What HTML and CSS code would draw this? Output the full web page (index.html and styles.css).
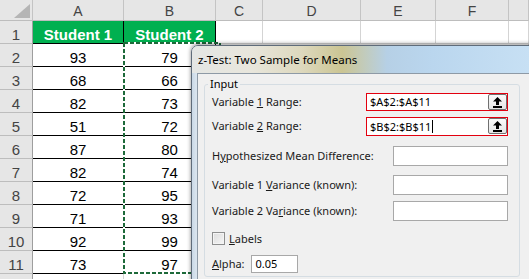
FILE: index.html
```html
<!DOCTYPE html>
<html lang="en">
<head>
  <meta charset="UTF-8" />
  <title>z-Test: Two Sample for Means</title>
  <link rel="stylesheet" href="styles.css">
</head>
<body>
  <div class="sheet">
    <div class="corner">
      <svg width="16" height="14" viewBox="0 0 16 14"><polygon points="16,0 16,14 0,14" fill="#b5b5b5"/></svg>
    </div>
    <div class="col-head">A</div>
    <div class="col-head">B</div>
    <div class="col-head">C</div>
    <div class="col-head">D</div>
    <div class="col-head">E</div>
    <div class="col-head">F</div>
    <div class="col-head"></div>

    <div class="row-head">1</div>
    <div class="cell title">Student 1</div>
    <div class="cell title">Student 2</div>
    <div class="cell blank"></div>
    <div class="cell blank"></div>
    <div class="cell blank"></div>
    <div class="cell blank"></div>
    <div class="cell blank"></div>

    <div class="row-head">2</div>
    <div class="cell data">93</div>
    <div class="cell data">79</div>
    <div class="cell rest"></div>

    <div class="row-head">3</div>
    <div class="cell data">68</div>
    <div class="cell data">66</div>
    <div class="cell rest"></div>

    <div class="row-head">4</div>
    <div class="cell data">82</div>
    <div class="cell data">73</div>
    <div class="cell rest"></div>

    <div class="row-head">5</div>
    <div class="cell data">51</div>
    <div class="cell data">72</div>
    <div class="cell rest"></div>

    <div class="row-head">6</div>
    <div class="cell data">87</div>
    <div class="cell data">80</div>
    <div class="cell rest"></div>

    <div class="row-head">7</div>
    <div class="cell data">82</div>
    <div class="cell data">74</div>
    <div class="cell rest"></div>

    <div class="row-head">8</div>
    <div class="cell data">72</div>
    <div class="cell data">95</div>
    <div class="cell rest"></div>

    <div class="row-head">9</div>
    <div class="cell data">71</div>
    <div class="cell data">93</div>
    <div class="cell rest"></div>

    <div class="row-head">10</div>
    <div class="cell data">92</div>
    <div class="cell data">99</div>
    <div class="cell rest"></div>

    <div class="row-head">11</div>
    <div class="cell data">73</div>
    <div class="cell data">97</div>
    <div class="cell rest"></div>

    <div class="row-head"></div>
    <div class="cell blank"></div>
    <div class="cell blank"></div>
    <div class="cell rest"></div>
  </div>

  <!-- copy marquee around B2:B11 -->
  <svg class="marquee" width="100" height="234">
    <rect x="1" y="1" width="96" height="230" fill="none" stroke="#fff" stroke-width="2"/>
    <rect x="1" y="1" width="96" height="230" fill="none" stroke="#1d6a3a" stroke-width="2" stroke-dasharray="4 2"/>
  </svg>

  <div class="dialog">
    <div class="titlebar">z-Test: Two Sample for Means</div>
    <div class="client">
      <fieldset class="group">
        <legend>Input</legend>

        <div class="row r1">
          <span class="label">Variable <u>1</u> Range:</span>
          <div class="range">
            <span class="value">$A$2:$A$11</span>
            <span class="pick">
              <svg width="9" height="11" viewBox="0 0 9 11"><path d="M4.5 0 L9 4.5 H6 V8 H3 V4.5 H0 Z" fill="#000"/><rect x="0" y="9" width="9" height="2" fill="#000"/></svg>
            </span>
          </div>
        </div>

        <div class="row r2">
          <span class="label">Variable <u>2</u> Range:</span>
          <div class="range">
            <span class="value">$B$2:$B$11<span class="caret"></span></span>
            <span class="pick">
              <svg width="9" height="11" viewBox="0 0 9 11"><path d="M4.5 0 L9 4.5 H6 V8 H3 V4.5 H0 Z" fill="#000"/><rect x="0" y="9" width="9" height="2" fill="#000"/></svg>
            </span>
          </div>
        </div>

        <div class="row r3">
          <span class="label">H<u>y</u>pothesized Mean Difference:</span>
          <div class="box"></div>
        </div>

        <div class="row r4">
          <span class="label">Variable 1 <u>V</u>ariance (known):</span>
          <div class="box"></div>
        </div>

        <div class="row r5">
          <span class="label">Variable 2 Va<u>r</u>iance (known):</span>
          <div class="box"></div>
        </div>

        <div class="row r6">
          <span class="check"></span>
          <span class="label"><u>L</u>abels</span>
        </div>

        <div class="row r7">
          <span class="label"><u>A</u>lpha:</span>
          <div class="alpha">0.05</div>
        </div>
      </fieldset>
    </div>
  </div>
</body>
</html>
```

FILE: styles.css
```css
* {
  margin: 0;
  padding: 0;
  box-sizing: border-box;
}

body {
  width: 529px;
  height: 279px;
  overflow: hidden;
  position: relative;
  background: #fff;
  font-family: 'Liberation Sans', Arial, sans-serif;
}

/* spreadsheet */
.sheet {
  display: grid;
  grid-template-columns: 33px 91px 92px 47px 98px 75px 73px 1fr;
  grid-template-rows: 21px repeat(12, 23px);
}

.corner,
.col-head,
.row-head {
  background: #e6e6e6;
  color: #444;
  font-size: 14px;
  border-right: 1px solid #c4c4c4;
  border-bottom: 1px solid #bdbdbd;
}

.corner {
  display: flex;
  align-items: flex-end;
  justify-content: flex-end;
  padding: 0 2px 2px 0;
}

.col-head {
  text-align: center;
  line-height: 20px;
  padding-top: 1px;
}

.row-head {
  display: flex;
  align-items: flex-end;
  justify-content: center;
  line-height: 17px;
  font-size: 15px;
  border-right-color: #9e9e9e;
}

.cell {
  display: flex;
  align-items: flex-end;
  justify-content: center;
  font-size: 15px;
  line-height: 17px;
  border-right: 1px solid #d4d4d4;
  border-bottom: 1px solid #d4d4d4;
}

.cell.title {
  background: #00b050;
  color: #fff;
  font-weight: bold;
  border-color: #000;
}

.cell.data {
  color: #000;
  border-color: #000;
}

.cell.rest {
  grid-column: span 5;
}

.marquee {
  position: absolute;
  left: 123px;
  top: 42px;
}

/* dialog window */
.dialog {
  position: absolute;
  left: 191px;
  top: 45px;
  width: 345px;
  height: 240px;
  border: 1px solid #5f6c7a;
  border-radius: 7px 0 0 0;
  background: linear-gradient(90deg, #c9d8e6, #d9e4ee 4px, #c4d5e5);
  box-shadow: 0 -1px 4px rgba(0, 0, 0, 0.45);
  overflow: hidden;
  display: flex;
  flex-direction: column;
  font-family: 'Noto Sans', 'Open Sans', sans-serif;
  font-size: 11px;
  color: #000;
}

.titlebar {
  height: 27px;
  line-height: 27px;
  padding-left: 6px;
  font-size: 11.5px;
  background: linear-gradient(90deg, #e4e6e4 0, #e8e6dc 60px, #ddd8bd 110px, #cbc593 150px, #c2cbbb 172px, #b6d0e6 195px, #bad6ee 240px, #c7e0f4 338px);
}

.client {
  flex: 1;
  margin-left: 5px;
  background: #f0f0f0;
  border-top: 1px solid #8e9aa6;
  border-left: 1px solid #8e9aa6;
}

.group {
  margin: 2px 0 0 6px;
  width: 316px;
  height: 201px;
  border: 1px solid #d5dde3;
  border-radius: 3px;
  padding: 1px 11px 0 7px;
}

.group legend {
  padding: 0 2px;
  margin-left: -4px;
  line-height: 16px;
}

.row {
  display: flex;
  align-items: flex-start;
  justify-content: space-between;
}

.r1 { height: 24px; }
.r2 { height: 29px; }
.r3 { height: 29px; }
.r4 { height: 26px; }
.r5 { height: 28px; }
.r6 { height: 26px; justify-content: flex-start; padding-top: 3px; }
.r7 { height: 18px; justify-content: flex-start; }

.label {
  line-height: 18px;
  color: #1a1a1a;
}

.r3 .label,
.r4 .label,
.r5 .label {
  line-height: 20px;
}

.range {
  width: 142px;
  height: 18px;
  background: #fff;
  border: 1px solid #e3000f;
  display: flex;
  justify-content: space-between;
}

.r2 .range {
  height: 19px;
}

.range .value {
  padding-left: 3px;
  line-height: 16px;
  display: flex;
  align-items: center;
}

.caret {
  display: inline-block;
  width: 1px;
  height: 13px;
  background: #000;
  margin-left: 1px;
}

.pick {
  width: 19px;
  height: 16px;
  border: 1px solid #707070;
  border-radius: 2px;
  background: linear-gradient(#fbfbfb, #e5e5e5);
  display: flex;
  align-items: center;
  justify-content: center;
}

.box {
  width: 115px;
  height: 20px;
  background: #fff;
  border: 1px solid #a8a8a8;
}

.check {
  width: 13px;
  height: 13px;
  border: 1px solid #8e8f8f;
  background: linear-gradient(135deg, #dcdcdc, #f6f6f6);
  box-shadow: inset 0 0 0 1px #f4f4f4;
  margin-right: 4px;
}

.r6 .label {
  line-height: 13px;
}

.alpha {
  width: 47px;
  height: 18px;
  margin-left: 6px;
  background: #fff;
  border: 1px solid #a8a8a8;
  padding-left: 4px;
  line-height: 16px;
}
```
